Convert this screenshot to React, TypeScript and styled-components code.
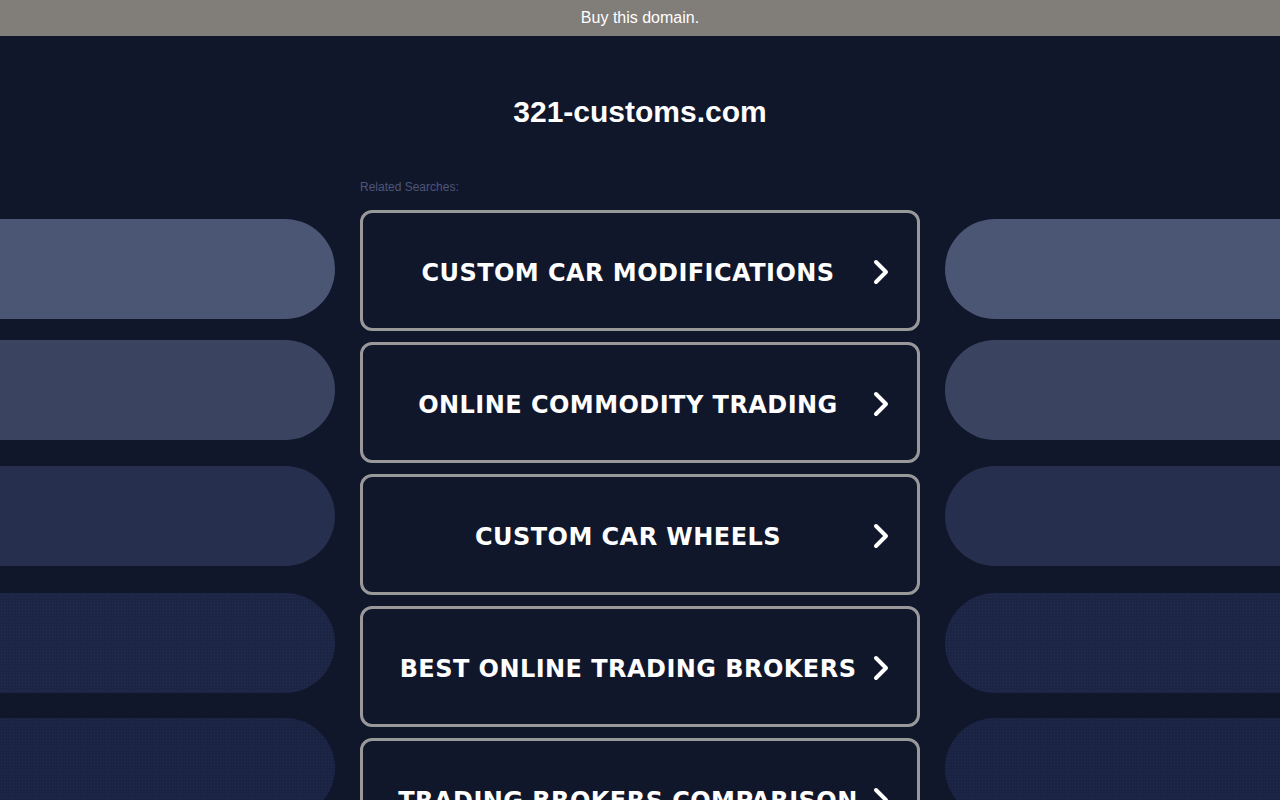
import React from "react";
import styled, { createGlobalStyle } from "styled-components";

const Global = createGlobalStyle`
  html, body { margin: 0; padding: 0; background: #11172b; }
  body { font-family: "Liberation Sans", Arial, sans-serif; overflow: hidden; }
`;

const Page = styled.div`
  min-height: 800px;
  background: #11172b;
`;

const TopBar = styled.a`
  display: flex;
  align-items: center;
  justify-content: center;
  height: 36px;
  background: #817d79;
  color: #ffffff;
  font-size: 16px;
  text-decoration: none;
`;

const Header = styled.header`
  display: flex;
  flex-direction: column;
  align-items: center;
  padding-top: 58px;
`;

const Title = styled.h1`
  margin: 0;
  color: #ffffff;
  font-size: 30px;
  font-weight: bold;
  line-height: 36px;
`;

const Layout = styled.div`
  display: grid;
  grid-template-columns: 1fr 560px 1fr;
  column-gap: 25px;
`;

const Center = styled.main`
  display: flex;
  flex-direction: column;
`;

const Label = styled.div`
  margin-top: 49px;
  height: 31px;
  color: #4c5679;
  font-size: 12px;
  line-height: 16px;
`;

const List = styled.div`
  display: flex;
  flex-direction: column;
  gap: 11px;
`;

const Button = styled.a`
  position: relative;
  display: flex;
  align-items: center;
  justify-content: center;
  box-sizing: border-box;
  height: 121px;
  padding: 4px 48px 0 24px;
  border: 3px solid #999999;
  border-radius: 12px;
  color: #ffffff;
  text-decoration: none;
  font-family: "DejaVu Sans", Verdana, sans-serif;
  font-weight: bold;
  font-size: 24px;
  letter-spacing: 0.45px;
  white-space: nowrap;
`;

const Chevron = styled.svg`
  position: absolute;
  right: 26px;
  top: 50%;
  margin-top: -13px;
  width: 20px;
  height: 28px;
`;

const Side = styled.aside`
  display: flex;
  flex-direction: column;
  padding-top: 89px;
  align-items: stretch;
`;

const Pill = styled.div<{ $bg: string; $mt: number; $right?: boolean; $dots?: boolean }>`
  height: 100px;
  margin-top: ${(p) => p.$mt}px;
  background-color: ${(p) => p.$bg};
  background-image: ${(p) =>
    p.$dots ? "radial-gradient(rgba(70,85,140,0.18) 0.6px, transparent 0.8px)" : "none"};
  background-size: 3px 3px;
  border-radius: ${(p) => (p.$right ? "50px 0 0 50px" : "0 50px 50px 0")};
`;

const pills = [
  { bg: "#4b5675", mt: 0 },
  { bg: "#3a4461", mt: 21 },
  { bg: "#262f4e", mt: 26 },
  { bg: "#1d2545", mt: 27, dots: true },
  { bg: "#1b2343", mt: 25, dots: true },
];

const items = [
  "CUSTOM CAR MODIFICATIONS",
  "ONLINE COMMODITY TRADING",
  "CUSTOM CAR WHEELS",
  "BEST ONLINE TRADING BROKERS",
  "TRADING BROKERS COMPARISON",
];

const SideColumn = ({ right }: { right?: boolean }) => (
  <Side>
    {pills.map((p, i) => (
      <Pill key={i} $bg={p.bg} $mt={p.mt} $right={right} $dots={p.dots} />
    ))}
  </Side>
);

export default function App() {
  return (
    <Page>
      <Global />
      <TopBar href="#">Buy this domain.</TopBar>
      <Header>
        <Title>321-customs.com</Title>
      </Header>
      <Layout>
        <SideColumn />
        <Center>
          <Label>Related Searches:</Label>
          <List>
            {items.map((t) => (
              <Button key={t} href="#">
                {t}
                <Chevron viewBox="0 0 20 28">
                  <path
                    d="M5 4 L15 14 L5 24"
                    fill="none"
                    stroke="#ffffff"
                    strokeWidth="4"
                    strokeLinecap="round"
                    strokeLinejoin="round"
                  />
                </Chevron>
              </Button>
            ))}
          </List>
        </Center>
        <SideColumn right />
      </Layout>
    </Page>
  );
}
